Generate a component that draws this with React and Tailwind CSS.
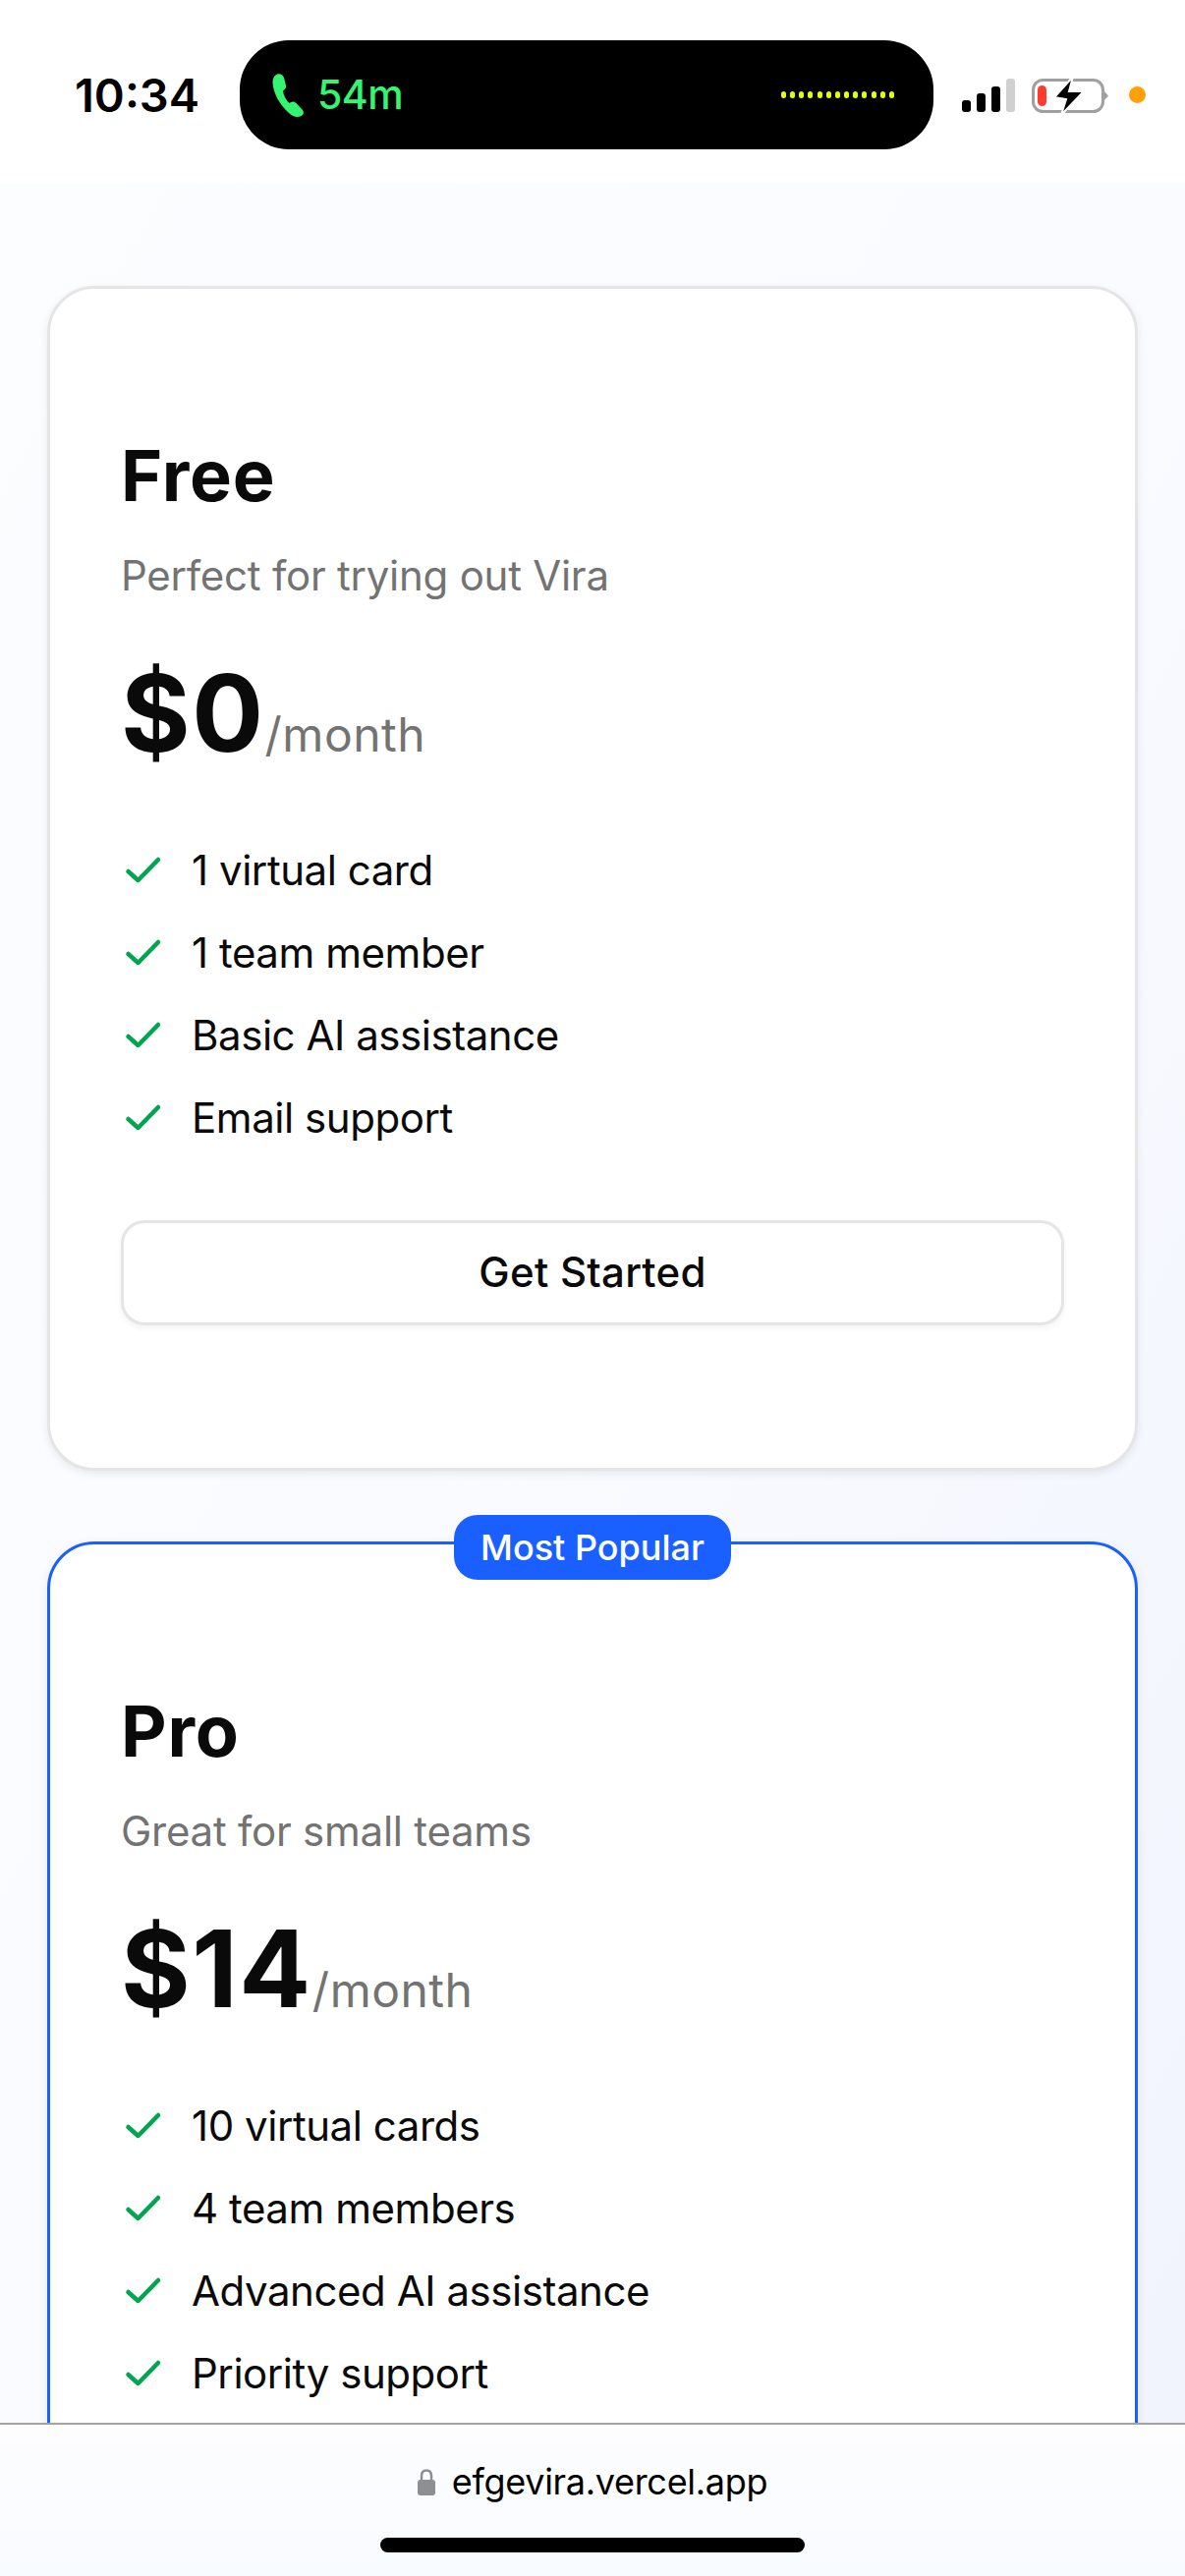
import React from 'react';

const plans = [
  {
    name: 'Free',
    tagline: 'Perfect for trying out Vira',
    price: '$0',
    features: ['1 virtual card', '1 team member', 'Basic AI assistance', 'Email support'],
  },
  {
    name: 'Pro',
    tagline: 'Great for small teams',
    price: '$14',
    popular: true,
    features: ['10 virtual cards', '4 team members', 'Advanced AI assistance', 'Priority support'],
  },
];

const CheckMark = () => (
  <svg width="48" height="48" viewBox="0 0 48 48" className="shrink-0" fill="none">
    <path d="M7.500 26 L17.500 35 L38 14" stroke="#00a64f" strokeWidth="4.500" strokeLinecap="round" strokeLinejoin="round" />
  </svg>
);

const StatusIcons = () => (
  <svg width="154" height="44" viewBox="0 0 154 44" fill="none" className="shrink-0">
    <rect x="0" y="27" width="9" height="12" rx="3" fill="#000" />
    <rect x="15" y="20" width="9" height="19" rx="3" fill="#000" />
    <rect x="30" y="13" width="9" height="26" rx="3" fill="#000" />
    <rect x="45" y="5" width="9" height="34" rx="3" fill="#d0d0d0" />
    <rect x="72.500" y="6.500" width="71" height="32" rx="10" stroke="#a0a0a0" strokeWidth="3" />
    <rect x="77" y="12" width="9" height="21" rx="4.500" fill="#ff3b30" />
    <path d="M145 18 L149 22.500 L145 27 Z" fill="#a0a0a0" />
    <path d="M113 3 L94 24 L106 26 L101 42 L124 18 L109 18 Z" fill="#000" stroke="#fff" strokeWidth="2" />
  </svg>
);

const DynamicIsland = () => (
  <div className="flex h-[111px] w-[706px] shrink-0 items-center rounded-[50px] bg-black pl-[33px] pr-[40px]">
    <svg width="32" height="44" viewBox="0 0 32 44" className="shrink-0" fill="#34f56f">
      <path d="M5 0.500 C8 -0.500 11 1 12 4 L14 12 C14.500 14 13.500 15.500 12 16.500 L11 17.500 C11.500 22 14 27 17.500 30 L19 29 C21 28 23 28.500 24.500 30 L31 37 C32.500 39 32 41.500 29.500 43 C26 45 21 44 17 40 C8 32 1 20 0.500 9 C0.300 5 2 2 5 0.500 Z" />
    </svg>
    <span className="ml-[14px] font-['Inter',sans-serif] text-[41px] leading-none font-medium tracking-[-0.5px] text-[#34f56f]">54m</span>
    <div className="ml-auto flex gap-[4.200px]">
      {Array.from({ length: 13 }).map((_, i) => (
        <span key={i} className="h-[7px] w-[5px] rounded-full bg-[#e6ff00]" />
      ))}
    </div>
  </div>
);

const StatusBar = () => (
  <div className="flex h-[186px] shrink-0 items-center bg-white pt-[7px] pl-[76px]">
    <span className="w-[168px] shrink-0 font-['Inter',sans-serif] text-[47px] leading-none font-semibold text-black">10:34</span>
    <DynamicIsland />
    <div className="ml-[29px]">
      <StatusIcons />
    </div>
    <span className="ml-[16px] h-[17px] w-[17px] shrink-0 rounded-full bg-[#ff9f0a]" />
  </div>
);

const PlanCard = ({ plan }) => (
  <div
    className={
      plan.popular
        ? 'relative rounded-[48px] border-[3px] border-[#1a5fff] bg-white px-[72px] pt-[142px] pb-[145px] shadow-[0_3px_12px_rgba(0,0,0,0.08)]'
        : 'relative rounded-[48px] border-[3px] border-[#e5e5e5] bg-white px-[72px] pt-[142px] pb-[145px] shadow-[0_3px_9px_rgba(0,0,0,0.08)]'
    }
  >
    {plan.popular && (
      <span className="absolute top-[-30px] left-1/2 flex h-[66px] w-[282px] -translate-x-1/2 items-center justify-center rounded-[24px] bg-[#1a5fff] text-[36px] font-medium text-white">
        Most Popular
      </span>
    )}
    <h3 className="text-[72px] leading-[96px] font-bold tracking-[0.8px] text-[#0a0a0a]">{plan.name}</h3>
    <p className="mt-[24px] text-[42px] leading-[60px] tracking-[-0.25px] text-[#737373]">{plan.tagline}</p>
    <div className="mt-[50px] flex items-baseline">
      <span className="text-[108px] leading-[120px] font-bold tracking-[1.5px] text-[#0a0a0a]">{plan.price}</span>
      <span className="text-[48px] leading-[72px] tracking-[0.5px] text-[#737373]">/month</span>
    </div>
    <ul className="mt-[69px] flex flex-col gap-[24px]">
      {plan.features.map((feature) => (
        <li key={feature} className="flex h-[60px] items-center gap-[24px] text-[42px] tracking-[-0.45px] text-[#0a0a0a]">
          <CheckMark />
          {feature}
        </li>
      ))}
    </ul>
    {/* the Pro button sits below the fold in the screenshot */}
    {!plan.popular && (
      <button className="mt-[75px] h-[107px] w-full rounded-[24px] border-[3px] border-[#e5e5e5] bg-white pb-[3px] text-[42px] font-medium tracking-[0.25px] text-[#0a0a0a] shadow-[0_3px_6px_rgba(0,0,0,0.05)]">
        Get Started
      </button>
    )}
  </div>
);

const BrowserBar = () => (
  <div className="flex h-[156px] shrink-0 flex-col items-center border-t-[2px] border-[#a3a3a3] bg-gradient-to-b from-[#fdfdfe] to-[#f8fbff]">
    <div className="mt-[33px] flex h-[50px] items-center gap-[17px]">
      <svg width="18" height="27" viewBox="0 0 18 27" fill="none" className="shrink-0">
        <path d="M4 12 V7 C4 3.500 6 1.500 9 1.500 C12 1.500 14 3.500 14 7 V12" stroke="#8e8e93" strokeWidth="2.500" />
        <rect x="0" y="11" width="18" height="16" rx="3" fill="#8e8e93" />
      </svg>
      <span className="text-[36px] leading-[50px] tracking-[-0.3px] text-black">efgevira.vercel.app</span>
    </div>
    <div className="mt-[32px] h-[15px] w-[432px] rounded-full bg-black" />
  </div>
);

export default function App() {
  return (
    <div className="flex h-[2622px] flex-col overflow-hidden font-['Inter',sans-serif]">
      <StatusBar />
      <main className="flex min-h-0 flex-1 flex-col gap-[72px] overflow-hidden bg-gradient-to-br from-[#fbfdff] via-[#f9fbff] to-[#f1f4fd] px-[48px] pt-[105px]">
        {plans.map((plan) => (
          <PlanCard key={plan.name} plan={plan} />
        ))}
      </main>
      <BrowserBar />
    </div>
  );
}
